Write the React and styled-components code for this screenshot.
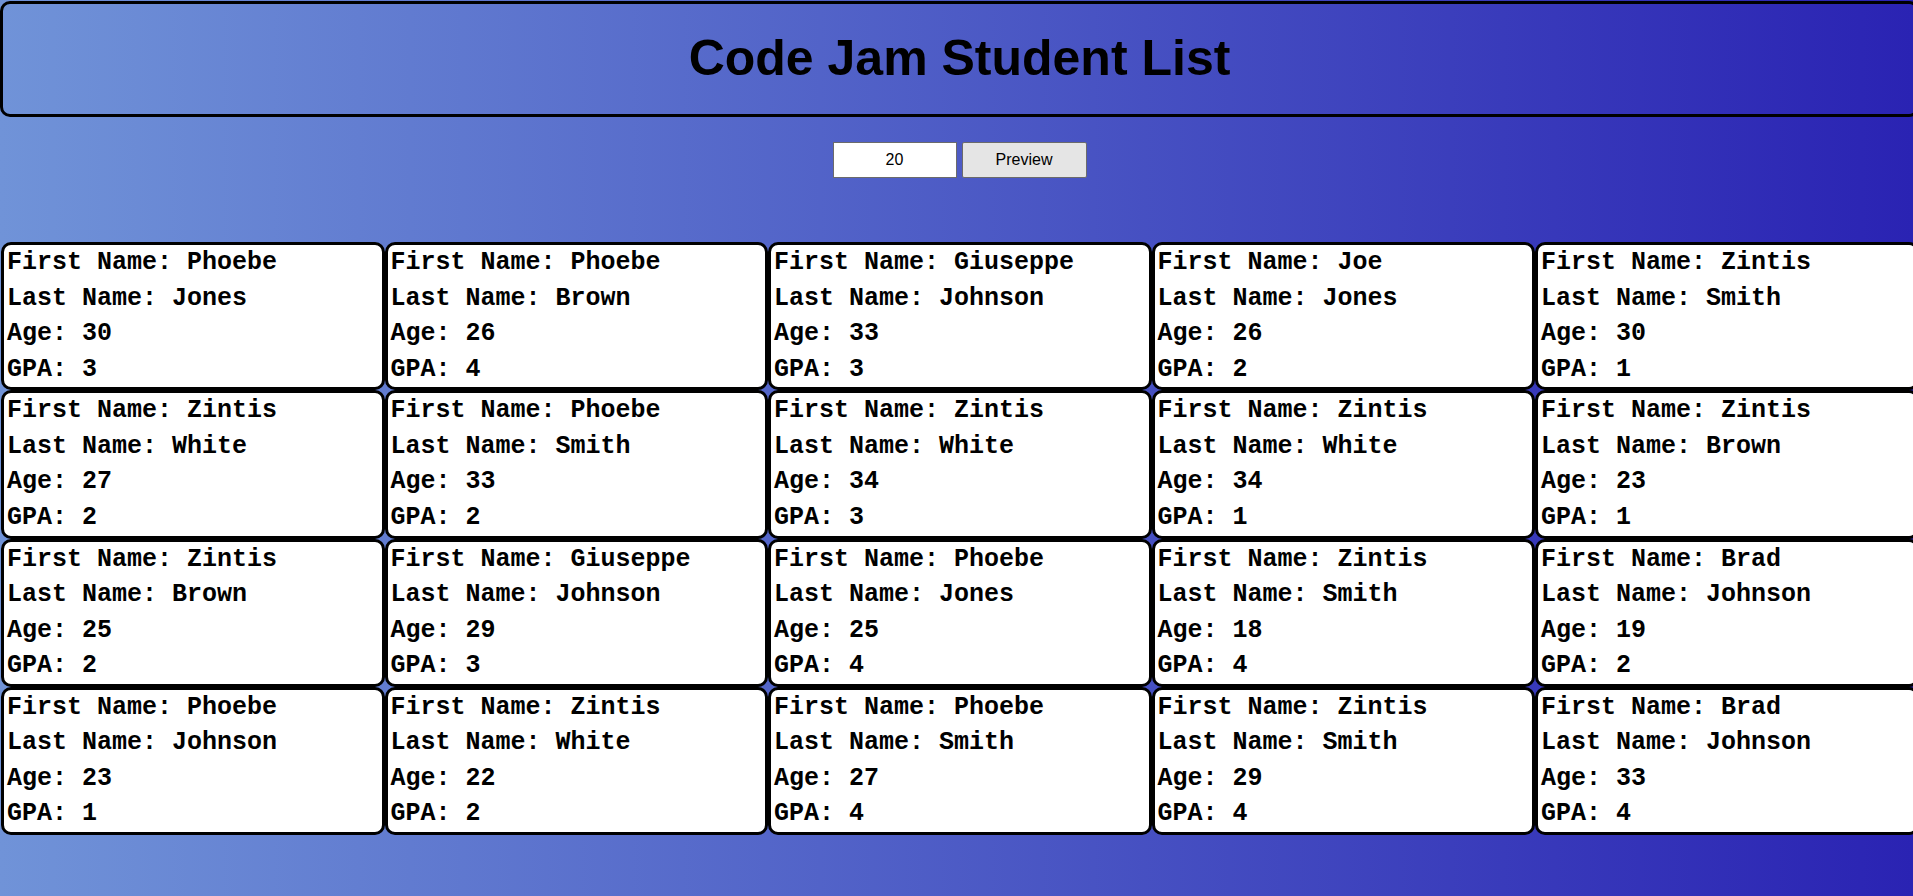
import React, { useState } from 'react';
import styled, { createGlobalStyle } from 'styled-components';

const GlobalStyle = createGlobalStyle`
  html, body {
    margin: 0;
    padding: 0;
  }
  body {
    min-height: 100vh;
    overflow: hidden;
    background: linear-gradient(to right, #7093d8, #2a23b3);
    font-family: "Liberation Sans", Arial, sans-serif;
  }
`;

const students = [
  { first: 'Phoebe', last: 'Jones', age: 30, gpa: 3 },
  { first: 'Phoebe', last: 'Brown', age: 26, gpa: 4 },
  { first: 'Giuseppe', last: 'Johnson', age: 33, gpa: 3 },
  { first: 'Joe', last: 'Jones', age: 26, gpa: 2 },
  { first: 'Zintis', last: 'Smith', age: 30, gpa: 1 },
  { first: 'Zintis', last: 'White', age: 27, gpa: 2 },
  { first: 'Phoebe', last: 'Smith', age: 33, gpa: 2 },
  { first: 'Zintis', last: 'White', age: 34, gpa: 3 },
  { first: 'Zintis', last: 'White', age: 34, gpa: 1 },
  { first: 'Zintis', last: 'Brown', age: 23, gpa: 1 },
  { first: 'Zintis', last: 'Brown', age: 25, gpa: 2 },
  { first: 'Giuseppe', last: 'Johnson', age: 29, gpa: 3 },
  { first: 'Phoebe', last: 'Jones', age: 25, gpa: 4 },
  { first: 'Zintis', last: 'Smith', age: 18, gpa: 4 },
  { first: 'Brad', last: 'Johnson', age: 19, gpa: 2 },
  { first: 'Phoebe', last: 'Johnson', age: 23, gpa: 1 },
  { first: 'Zintis', last: 'White', age: 22, gpa: 2 },
  { first: 'Phoebe', last: 'Smith', age: 27, gpa: 4 },
  { first: 'Zintis', last: 'Smith', age: 29, gpa: 4 },
  { first: 'Brad', last: 'Johnson', age: 33, gpa: 4 },
];

const Page = styled.div`
  width: calc(100% + 6px);
  padding-top: 1px;
  display: flex;
  flex-direction: column;
`;

const Header = styled.header`
  height: 110px;
  border: 3px solid #000;
  border-radius: 10px;
  display: flex;
  align-items: center;
  justify-content: center;
`;

const Title = styled.h1`
  margin: 0 0 2px 0;
  font-family: "Liberation Sans", Arial, sans-serif;
  font-size: 50px;
  font-weight: bold;
  color: #000;
`;

const Controls = styled.div`
  margin-top: 25px;
  display: flex;
  justify-content: center;
  gap: 5px;
`;

const CountInput = styled.input`
  box-sizing: border-box;
  width: 124px;
  height: 36px;
  border: 1px solid #6b6b6b;
  background: #fff;
  text-align: center;
  font-family: "Liberation Sans", Arial, sans-serif;
  font-size: 16px;
  color: #000;
  padding: 0;
  outline: none;
`;

const PreviewButton = styled.button`
  box-sizing: border-box;
  width: 125px;
  height: 36px;
  border: 1px solid #6b6b6b;
  border-radius: 2px;
  background: #e5e5e5;
  font-family: "Liberation Sans", Arial, sans-serif;
  font-size: 16px;
  color: #000;
  cursor: pointer;
`;

const Grid = styled.div`
  margin-top: 64px;
  padding-left: 1px;
  display: grid;
  grid-template-columns: repeat(5, 383.5px);
`;

const Card = styled.div`
  box-sizing: border-box;
  background: #fff;
  border: 3px solid #000;
  border-radius: 10px;
  padding: 0 3px;
  font-family: "Courier New", "Nimbus Mono PS", "Liberation Mono", monospace;
  font-weight: bold;
  font-size: 25px;
  line-height: 35.56px;
  color: #000;
  white-space: nowrap;
`;

const Line = styled.div``;

export default function App() {
  const [count, setCount] = useState('20');
  return (
    <>
      <GlobalStyle />
      <Page>
        <Header>
          <Title>Code Jam Student List</Title>
        </Header>
        <Controls>
          <CountInput value={count} onChange={e => setCount(e.target.value)} />
          <PreviewButton>Preview</PreviewButton>
        </Controls>
        <Grid>
          {students.map((s, i) => (
            <Card key={i}>
              <Line>First Name: {s.first}</Line>
              <Line>Last Name: {s.last}</Line>
              <Line>Age: {s.age}</Line>
              <Line>GPA: {s.gpa}</Line>
            </Card>
          ))}
        </Grid>
      </Page>
    </>
  );
}
